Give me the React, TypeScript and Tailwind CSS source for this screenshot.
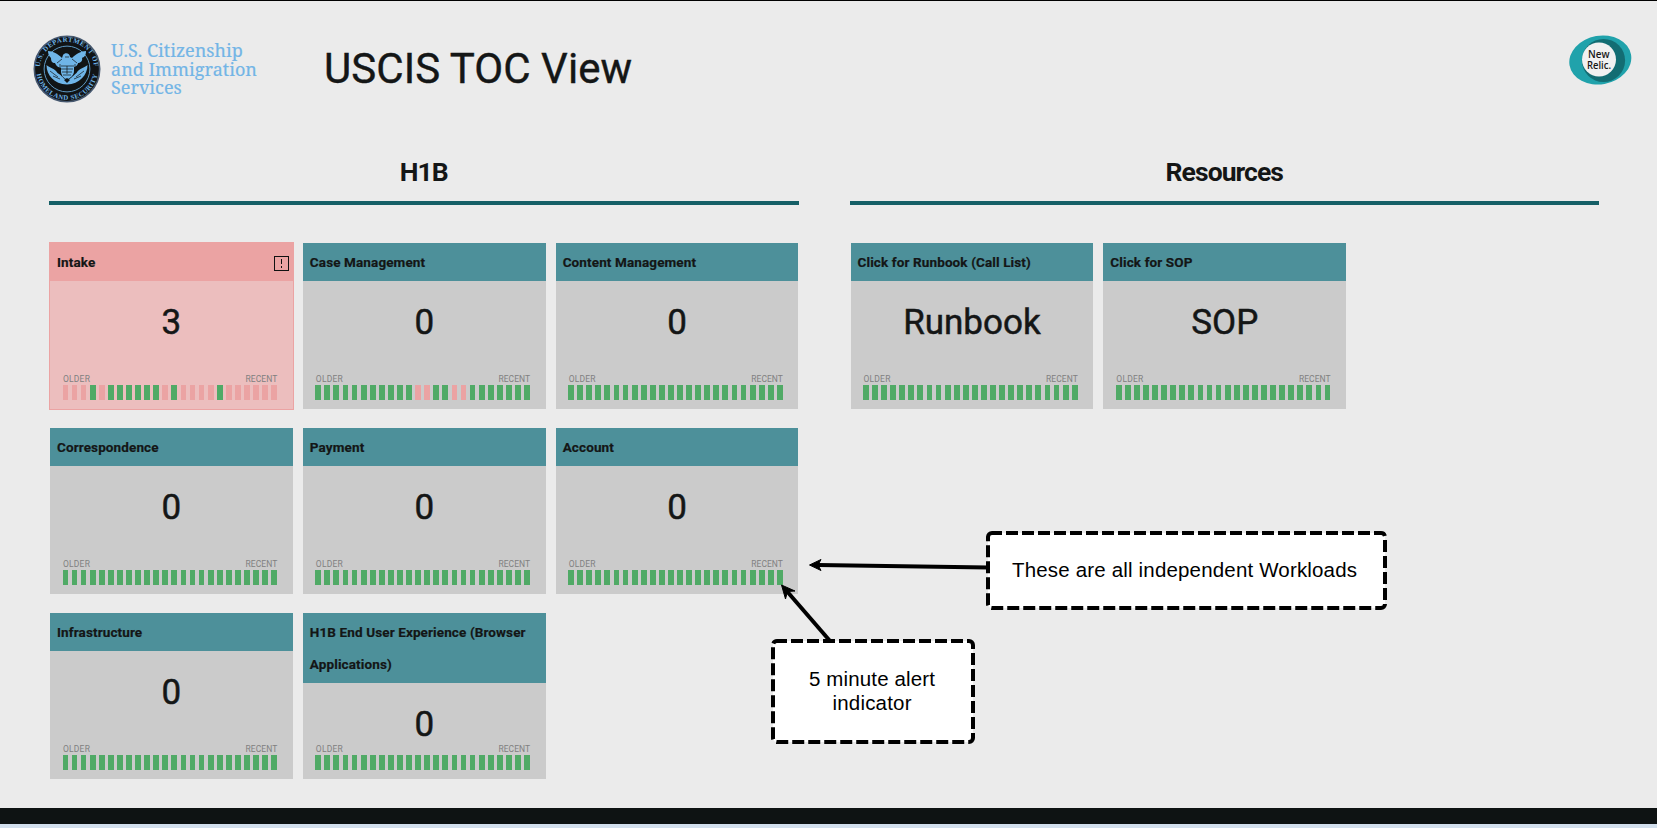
import React from "react";

type CardData = { title: string; value: string; bars?: string; alert?: boolean };

const OK = "gggggggggggggggggggggggg";

const h1b: CardData[] = [
  { title: "Intake", value: "3", bars: "pppgpggggggpgppppgpppppp", alert: true },
  { title: "Case Management", value: "0", bars: "gggggggggggppggppggggggg" },
  { title: "Content Management", value: "0" },
  { title: "Correspondence", value: "0" },
  { title: "Payment", value: "0" },
  { title: "Account", value: "0" },
  { title: "Infrastructure", value: "0" },
  { title: "H1B End User Experience (Browser Applications)", value: "0" },
];

const resources: CardData[] = [
  { title: "Click for Runbook (Call List)", value: "Runbook" },
  { title: "Click for SOP", value: "SOP" },
];

function Card({ title, value, bars = OK, alert = false }: CardData) {
  return (
    <div
      className={
        alert
          ? "-m-px flex h-[168px] flex-col border border-[#eba3a3] bg-[#ecbebe]"
          : "flex h-[166px] flex-col bg-[#cbcbcb]"
      }
    >
      <div
        className={
          "flex shrink-0 items-center justify-between pt-[3px] pr-1 pb-[3.4px] pl-[7px] " +
          (alert ? "bg-[#eba3a3]" : "bg-[#4d909a]")
        }
      >
        <div className="text-[13.5px] leading-[32px] font-bold tracking-[0.12px] [-webkit-text-stroke:0.2px_#141616]">{title}</div>
        {alert && (
          <svg className="mt-[2px] h-[15px] w-[15px]" viewBox="0 0 15 15" shapeRendering="crispEdges">
            <rect x="0.5" y="0.5" width="14" height="14" fill="none" stroke="#111" />
            <path d="M7.5 3v5M7.5 10v2" stroke="#111" />
          </svg>
        )}
      </div>
      <div className="flex h-[60px] shrink-0 items-center justify-center pt-[22px] text-[35px] leading-none [-webkit-text-stroke:0.5px_#141616]">
        {value}
      </div>
      <div className="mt-auto shrink-0 pr-[15.5px] pb-[9px] pl-[12.5px]">
        <div className="flex h-[11px] items-center justify-between text-[8.5px] leading-none text-[#808080]">
          <span className="pl-[0.5px] tracking-[0.2px]">OLDER</span>
          <span className="tracking-[0.05px]">RECENT</span>
        </div>
        <div className="flex h-[15px] justify-between">
          {bars.split("").map((b, i) => (
            <div key={i} className={b === "g" ? "w-[5.8px] bg-[#50aa66]" : "w-[5.8px] bg-[#eba3a3]"} />
          ))}
        </div>
      </div>
    </div>
  );
}

function Section({ title, cards }: { title: string; cards: CardData[] }) {
  return (
    <section className="w-[749.5px]">
      <h2 className="flex h-[56px] items-center justify-center pb-[2px] text-[26.5px] font-bold tracking-[-0.95px]">{title}</h2>
      <div className="h-1 bg-[#155f66]" />
      <div className="mt-[38px] grid grid-cols-3 gap-x-[10px] gap-y-[19px] pl-px">
        {cards.map((c) => (
          <Card key={c.title} {...c} />
        ))}
      </div>
    </section>
  );
}

function Seal() {
  return (
    <svg className="h-[68px] w-[68px]" viewBox="0 0 68 68">
      <defs>
        <path id="arcTop" d="M7.6 41a27.3 27.3 0 1 1 52.8 0" />
        <path id="arcBottom" d="M3.1 34a30.9 30.9 0 0 0 61.8 0" />
      </defs>
      <circle cx="34" cy="34" r="32.7" fill="#111415" stroke="#46586f" strokeWidth="1.6" />
      <circle cx="34" cy="34" r="22.9" fill="none" stroke="#5d98c3" strokeWidth="1" />
      <g fill="#6fb5e8" fontFamily="Liberation Serif, serif" fontWeight="bold">
        <text textAnchor="middle" fontSize="6.8" letterSpacing="0.5">
          <textPath href="#arcTop" startOffset="50%">U.S. DEPARTMENT OF</textPath>
        </text>
        <text textAnchor="middle" fontSize="6.8" letterSpacing="0.5">
          <textPath href="#arcBottom" startOffset="50%">HOMELAND SECURITY</textPath>
        </text>
      </g>
      <g fill="#6fb5e8">
        <path d="M15 16c5 0 10 3 14 7l1-3c2-3 7-2 7 2l2 1c4-4 9-7 14-7 0 5-2 6-4 7 1 3-2 5-4 5 0 3-5 5-8 5h-7c-4 0-7-2-8-5-3 0-4-2-4-5-2-2-3-4-3-7Z" />
        <path d="M28 27h13v9c0 5-4 7-7 9-3-2-6-4-6-9Z" />
        <path d="M13.5 30c3 3 8 3 11 8l6 4 4 3 4-3 5-4c3-5 8-5 11-8 0 10-8 19-20.5 19.5C21 49 13.5 40 13.5 30Z" />
      </g>
      <path d="M31 45l3-2 3 2-3 3Z" fill="#111415" />
      <g stroke="#111415" strokeWidth="0.7" fill="none">
        <path d="M27 29v7c0 4 3 7 7 9 4-2 8-5 8-9v-7M28 31h13M28 34h12M29 37h10M30 40h8M34 31v8M17 36l8 6M20 41l7 3M51 36l-8 6M48 41l-7 3M20 31l6 6M48 31l-6 6M24 28l5-4M44 28l-5-4M32 22h4" />
      </g>
    </svg>
  );
}

function NewRelic() {
  return (
    <svg className="mt-[34px] h-[50px] w-[63px]" viewBox="0 0 63 50">
      <ellipse cx="31.3" cy="25" rx="31.2" ry="24.3" transform="rotate(-10 31.3 25)" fill="#20a2ab" />
      <circle cx="34.5" cy="25.5" r="21.6" fill="#136d73" />
      <circle cx="30" cy="24.5" r="17" fill="#f1f1f1" />
      <g fill="#171717" fontFamily="Open Sans, sans-serif" fontWeight="600" fontSize="11.5">
        <text x="19" y="23" textLength="21.5" lengthAdjust="spacingAndGlyphs">New</text>
        <text x="18" y="33.5" textLength="24" lengthAdjust="spacingAndGlyphs">Relic.</text>
      </g>
    </svg>
  );
}

function Callouts() {
  return (
    <svg className="pointer-events-none absolute top-[519px] left-[765px] h-[230px] w-[630px]" viewBox="765 520 630 230">
      <g fill="none" stroke="#000" strokeWidth="4">
        <path d="M988 567.5L818 565" />
        <path d="M830 641L785 589" />
      </g>
      <path d="M809.5 565l11.5-5.500-3 5.500 3 5.500Z" stroke="#000" />
      <path d="M781.5 585l13.500 6-7.500.5-2 7.500Z" stroke="#000" />
      <g fill="#fff" stroke="#000" strokeWidth="4" strokeDasharray="12 4" strokeDashoffset="2">
        <rect x="988" y="533" width="397" height="75" rx="4" />
        <rect x="773" y="641" width="200" height="101" rx="4" />
      </g>
      <g fontFamily="Liberation Sans, sans-serif" fontSize="20.5" textAnchor="middle">
        <text x="1184.5" y="577" textLength="345">These are all independent Workloads</text>
        <text x="872" y="686" textLength="126">5 minute alert</text>
        <text x="872" y="710" textLength="79">indicator</text>
      </g>
    </svg>
  );
}

export default function App() {
  return (
    <div className="relative flex h-[828px] w-[1657px] flex-col overflow-hidden border-t border-black bg-[#ebebeb] font-['Roboto',sans-serif] text-[#141616]">
      <header className="flex h-[144px] shrink-0 items-start pr-[25px] pl-[33px]">
        <div className="mt-[33.5px] flex">
          <Seal />
          <div className="mt-[6.5px] ml-[10px] w-[213px] font-['Noto_Serif','Liberation_Serif',serif] text-[18px] leading-[18.6px] whitespace-nowrap text-[#73b5e6] [-webkit-text-stroke:0.2px_#73b5e6]">
            <div>U.S. Citizenship</div>
            <div>and Immigration</div>
            <div>Services</div>
          </div>
        </div>
        <h1 className="mt-[43px] text-[42px] leading-[50px] tracking-[0.05px] [-webkit-text-stroke:0.4px_#141616]">USCIS TOC View</h1>
        <div className="ml-auto">
          <NewRelic />
        </div>
      </header>
      <main className="flex flex-1 gap-[51px] pl-[49px]">
        <Section title="H1B" cards={h1b} />
        <Section title="Resources" cards={resources} />
      </main>
      <footer className="h-5 shrink-0 border-b-4 border-[#d2dfed] bg-[#0e1313]" />
      <Callouts />
    </div>
  );
}
